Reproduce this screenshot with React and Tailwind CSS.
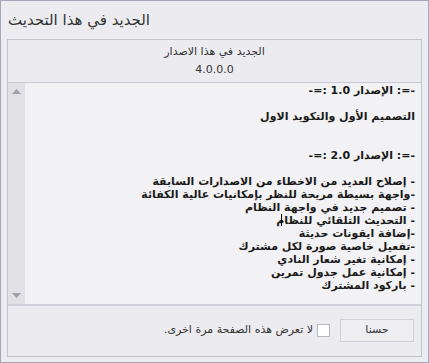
import React from "react";

const lines = [
  "-=: الإصدار 1.0 :=-",
  "",
  "التصميم الأول والتكويد الاول",
  "",
  "",
  "-=: الإصدار 2.0 :=-",
  "",
  "- إصلاح العديد من الاخطاء من الاصدارات السابقة",
  "-واجهة بسيطة مريحة للنظر بإمكانيات عالية الكفائة",
  "- تصميم جديد في واجهة النظام",
  "- التحديث التلقائي للنظام",
  "-إضافة ايقونات حديثة",
  "-تفعيل خاصية صورة لكل مشترك",
  "- إمكانية تغير شعار النادي",
  "- إمكانية عمل جدول تمرين",
  "- باركود المشترك",
];

export default function App() {
  return (
    <div
      className="w-[429px] h-[363px] border border-[#a6a6ba] bg-[#ececf0] flex flex-col text-[#222]"
      style={{ fontFamily: '"DejaVu Sans", sans-serif' }}
    >
      <div className="h-[38px] flex items-center pl-[7px] text-[15px] text-[#333]">
        الجديد في هذا التحديث
      </div>
      <div className="mx-[6px] mb-[5px] flex-1 border border-[#c2c2cd] flex flex-col">
        <div className="h-[43px] border-b border-[#c8c8d2] flex flex-col items-center justify-center text-[11px] text-[#333] leading-[18px]" dir="rtl">
          <div>الجديد في هذا الاصدار</div>
          <div>4.0.0.0</div>
        </div>
        <div className="h-[223px] flex bg-[#f2f2f4] border-b-2 border-[#cfcfd8]" dir="rtl">
          <div className="flex-1 pr-[6px] pt-[1px] text-[11px] font-bold leading-[13px] text-[#1a1a1a]">
            {lines.map((l, i) => (
              <div key={i} className="h-[13px] whitespace-nowrap">
                {i === 10 ? (
                  <span className="relative inline-block">
                    {l}
                    <span className="absolute left-[5px] top-[0px] w-[1px] h-[12px] bg-black" />
                  </span>
                ) : (
                  l
                )}
              </div>
            ))}
          </div>
          <div className="w-[17px] bg-[#e1e1e5] flex flex-col items-center justify-between py-[6px]">
            <svg width="9" height="5" viewBox="0 0 9 5">
              <polygon points="0,5 9,5 4.5,0" fill="#a0a0a8" />
            </svg>
            <svg width="9" height="5" viewBox="0 0 9 5">
              <polygon points="0,0 9,0 4.5,5" fill="#a0a0a8" />
            </svg>
          </div>
        </div>
        <div className="flex-1 flex items-center pr-[7px] pb-[1px]" dir="rtl">
          <div className="w-[74px] h-[23px] border border-[#cfcfd8] bg-[#efeff2] flex items-center justify-center text-[11px] text-[#333]">
            حسنا
          </div>
          <div className="w-[13px] h-[13px] border border-[#b8b8c2] bg-white mr-[10px]" />
          <div className="mr-[4px] text-[11px] text-[#333]">لا تعرض هذه الصفحة مرة اخرى.</div>
        </div>
      </div>
    </div>
  );
}
